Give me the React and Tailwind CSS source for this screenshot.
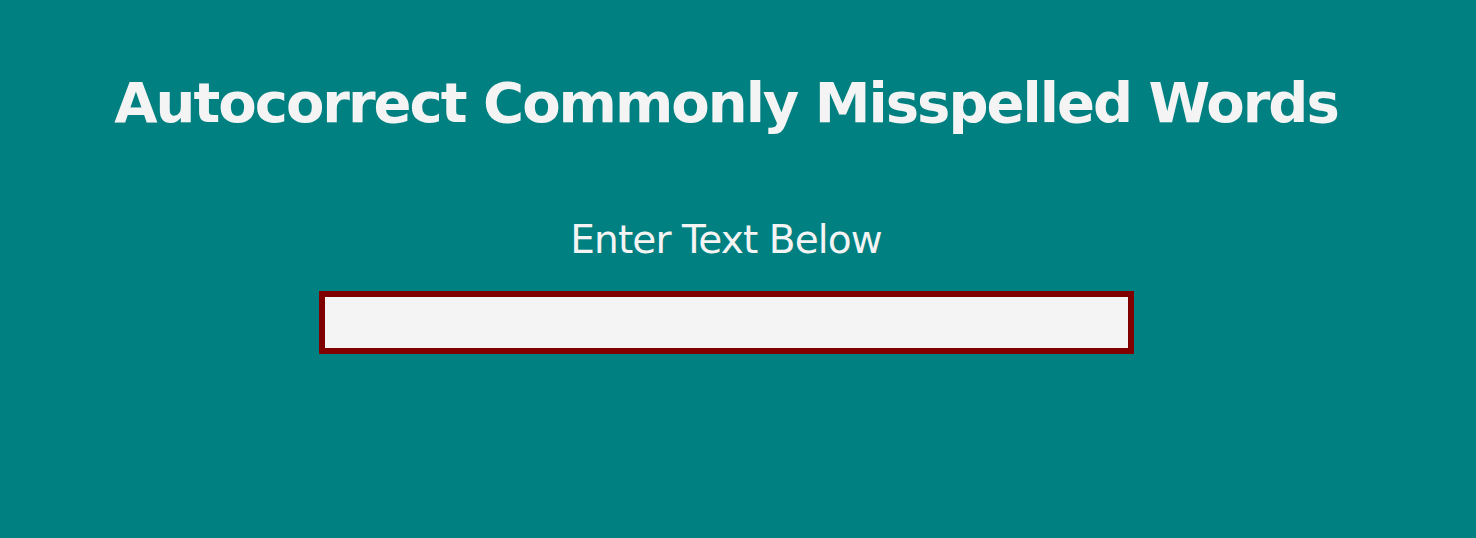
export default function App() {
  return (
    <div className="min-h-[538px] bg-[#008080] text-[#f4f4f4]" style={{ fontFamily: '"DejaVu Sans", Verdana, sans-serif' }}>
      <div className="w-[1452px] flex flex-col items-center">
        <h1 className="mt-[65px] text-[56px] leading-[76px] font-bold tracking-[-2px]">Autocorrect Commonly Misspelled Words</h1>
        <p className="mt-[74px] text-[39px] leading-[50px] tracking-[-0.9px]">Enter Text Below</p>
        <input
          type="text"
          className="mt-[26px] w-[815px] h-[63px] border-[6px] border-[#800000] bg-[#f4f4f4] outline-none"
        />
      </div>
    </div>
  );
}
